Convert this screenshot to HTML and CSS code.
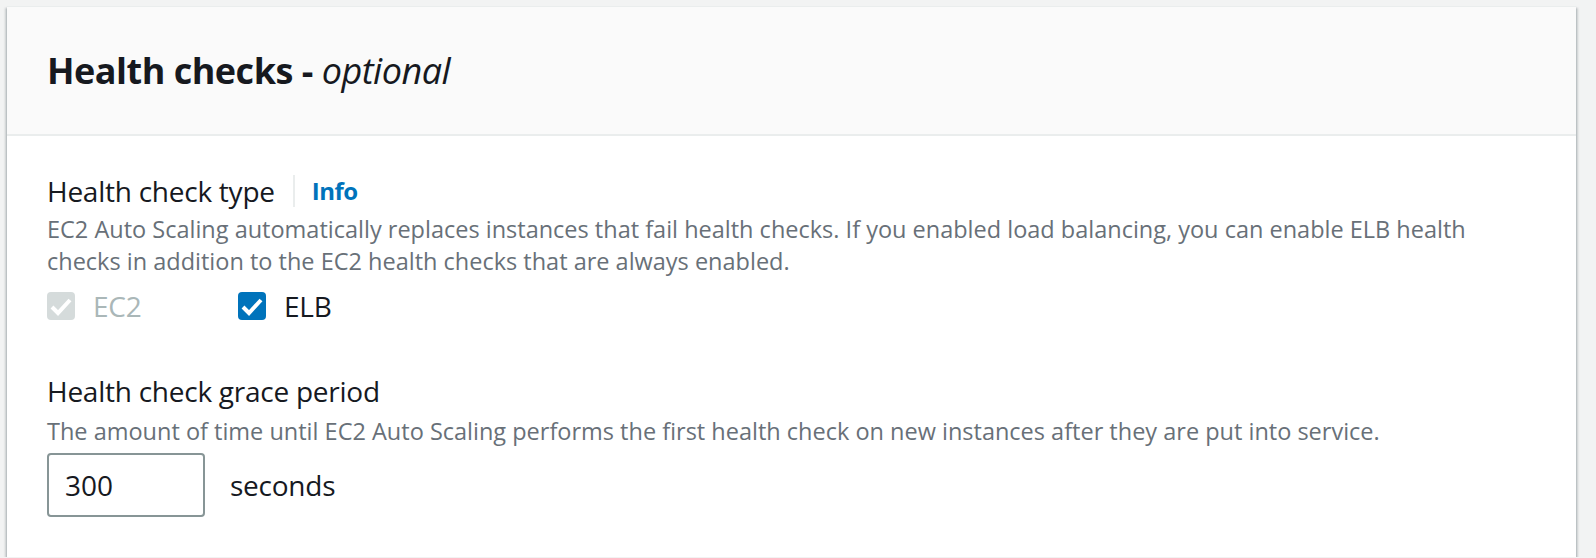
FILE: index.html
```html
<!DOCTYPE html>
<html lang="en">
<head>
    <meta charset="utf-8">
    <title>Health checks</title>
    <link rel="stylesheet" href="styles.css">
</head>
<body>

<div class="container">
    <div class="container-header">
        <h2>Health checks - <i>optional</i></h2>
    </div>

    <div class="container-body">

        <div class="field">
            <div class="field-label">
                <span>Health check type</span>
                <span class="divider"></span>
                <a class="info-link" href="#">Info</a>
            </div>
            <div class="field-description">
                EC2 Auto Scaling automatically replaces instances that fail health checks. If you enabled load balancing, you can enable ELB health checks in addition to the EC2 health checks that are always enabled.
            </div>
            <div class="checkbox-group">
                <label class="checkbox disabled">
                    <span class="checkbox-box">
                        <svg viewBox="0 0 28 28" width="28" height="28"><polyline points="5,15 11,21 23,8"/></svg>
                    </span>
                    EC2
                </label>
                <label class="checkbox checked">
                    <span class="checkbox-box">
                        <svg viewBox="0 0 28 28" width="28" height="28"><polyline points="5,15 11,21 23,8"/></svg>
                    </span>
                    ELB
                </label>
            </div>
        </div>

        <div class="field field-next">
            <div class="field-label">
                <span>Health check grace period</span>
            </div>
            <div class="field-description">
                The amount of time until EC2 Auto Scaling performs the first health check on new instances after they are put into service.
            </div>
            <div class="input-row">
                <input class="text-input" type="text" value="300">
                <span class="unit">seconds</span>
            </div>
        </div>

    </div>
</div>

</body>
</html>
```

FILE: styles.css
```css
html, body {
    margin: 0;
    padding: 0;
    background-color: #f2f3f3;
    font-family: "Open Sans", sans-serif;
    color: #16191f;
}

body {
    padding: 6px 20px 0 7px;
}

.container {
    background-color: #fff;
    border-top: 1px solid #eaeded;
    box-shadow: 0 2px 2px 0 rgba(0, 28, 36, .3),
                2px 2px 2px 0 rgba(0, 28, 36, .15),
                -2px 2px 2px 0 rgba(0, 28, 36, .15);
}

.container-header {
    background-color: #fafafa;
    border-bottom: 2px solid #eaeded;
    padding: 42px 40px 41px;
}

.container-header h2 {
    margin: 0;
    font-size: 36px;
    line-height: 44px;
    font-weight: 700;
    letter-spacing: -0.5px;
}

.container-header h2 i {
    font-weight: 400;
}

.container-body {
    padding: 33px 40px 40px;
}

.field-next {
    margin-top: 41px;
}

.field-label {
    display: flex;
    align-items: center;
    font-size: 28px;
    line-height: 44px;
    letter-spacing: -0.25px;
}

.divider {
    width: 2px;
    height: 32px;
    margin: 0 17px 0 18px;
    background-color: #eaeded;
}

.info-link {
    font-size: 24px;
    font-weight: 700;
    letter-spacing: -0.5px;
    color: #0073bb;
    text-decoration: none;
}

.field-description {
    font-size: 23.5px;
    line-height: 32px;
    color: #687078;
}

.field-next .field-description {
    margin-top: 2px;
}

.checkbox-group {
    display: grid;
    grid-template-columns: 191px auto;
    justify-content: start;
    margin-top: 7px;
}

.checkbox {
    display: flex;
    align-items: center;
    font-size: 28px;
    line-height: 44px;
    letter-spacing: -0.25px;
}

.checkbox-box {
    display: inline-block;
    width: 28px;
    height: 28px;
    margin-right: 18px;
    border-radius: 4px;
}

.checkbox-box svg {
    display: block;
}

.checkbox-box polyline {
    fill: none;
    stroke: #fff;
    stroke-width: 4;
}

.checkbox.disabled {
    color: #aab7b8;
}

.checkbox.disabled .checkbox-box {
    background-color: #d5dbdb;
}

.checkbox.checked .checkbox-box {
    background-color: #0073bb;
}

.input-row {
    display: flex;
    align-items: center;
    margin-top: 6px;
}

.text-input {
    box-sizing: border-box;
    width: 158px;
    height: 64px;
    padding: 0 16px;
    border: 2px solid #879596;
    border-radius: 4px;
    font-family: "Open Sans", sans-serif;
    font-size: 28px;
    color: #16191f;
    outline: none;
}

.unit {
    margin-left: 25px;
    font-size: 28px;
    letter-spacing: -0.25px;
}
```
